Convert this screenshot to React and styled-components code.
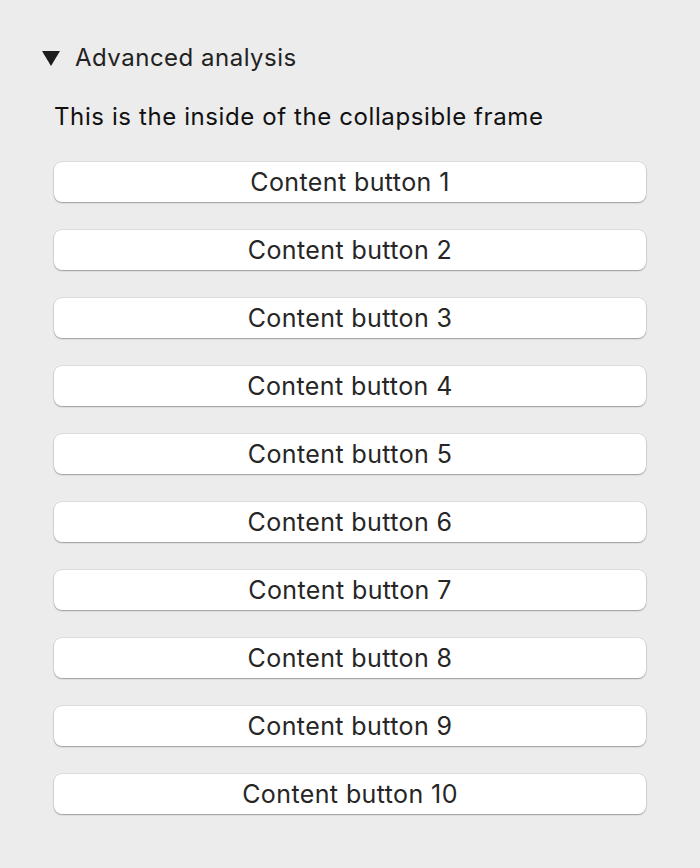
import styled, { createGlobalStyle } from 'styled-components'

const GlobalStyle = createGlobalStyle`
  html, body {
    margin: 0;
    padding: 0;
    background: #ececec;
  }
  body {
    font-family: Inter, "Liberation Sans", Arial, sans-serif;
    color: #222222;
  }
`

const Frame = styled.div`
  padding: 40px 54px 40px 42px;
`

const Header = styled.div`
  display: flex;
  align-items: center;
  height: 34px;
  font-size: 24px;
  letter-spacing: 0.5px;
  color: #222222;
`

const Arrow = styled.span`
  width: 0;
  height: 0;
  border-left: 9px solid transparent;
  border-right: 9px solid transparent;
  border-top: 15px solid #1c1c1c;
  margin-right: 15px;
  margin-top: 2px;
`

const Body = styled.div`
  padding-left: 12px;
  margin-top: 25px;
`

const Intro = styled.p`
  margin: 0 0 27px 0;
  font-size: 24px;
  line-height: 36px;
  letter-spacing: 0.6px;
  color: #111111;
`

const ButtonList = styled.div`
  display: flex;
  flex-direction: column;
  gap: 28px;
`

const ContentButton = styled.button`
  height: 40px;
  width: 100%;
  background: #ffffff;
  border: none;
  border-radius: 8px;
  box-shadow: 0 0 0 0.5px rgba(0, 0, 0, 0.12), 0 1px 1.5px rgba(0, 0, 0, 0.3);
  font-family: Inter, "Liberation Sans", Arial, sans-serif;
  font-size: 25px;
  letter-spacing: 0.4px;
  color: #262626;
  cursor: pointer;
  padding: 0;
`

const buttons = Array.from({ length: 10 }, (_, i) => `Content button ${i + 1}`)

const App = () => {
  return (
    <>
      <GlobalStyle />
      <Frame>
        <Header>
          <Arrow />
          Advanced analysis
        </Header>
        <Body>
          <Intro>This is the inside of the collapsible frame</Intro>
          <ButtonList>
            {buttons.map((label) => (
              <ContentButton key={label}>{label}</ContentButton>
            ))}
          </ButtonList>
        </Body>
      </Frame>
    </>
  )
}

export default App
